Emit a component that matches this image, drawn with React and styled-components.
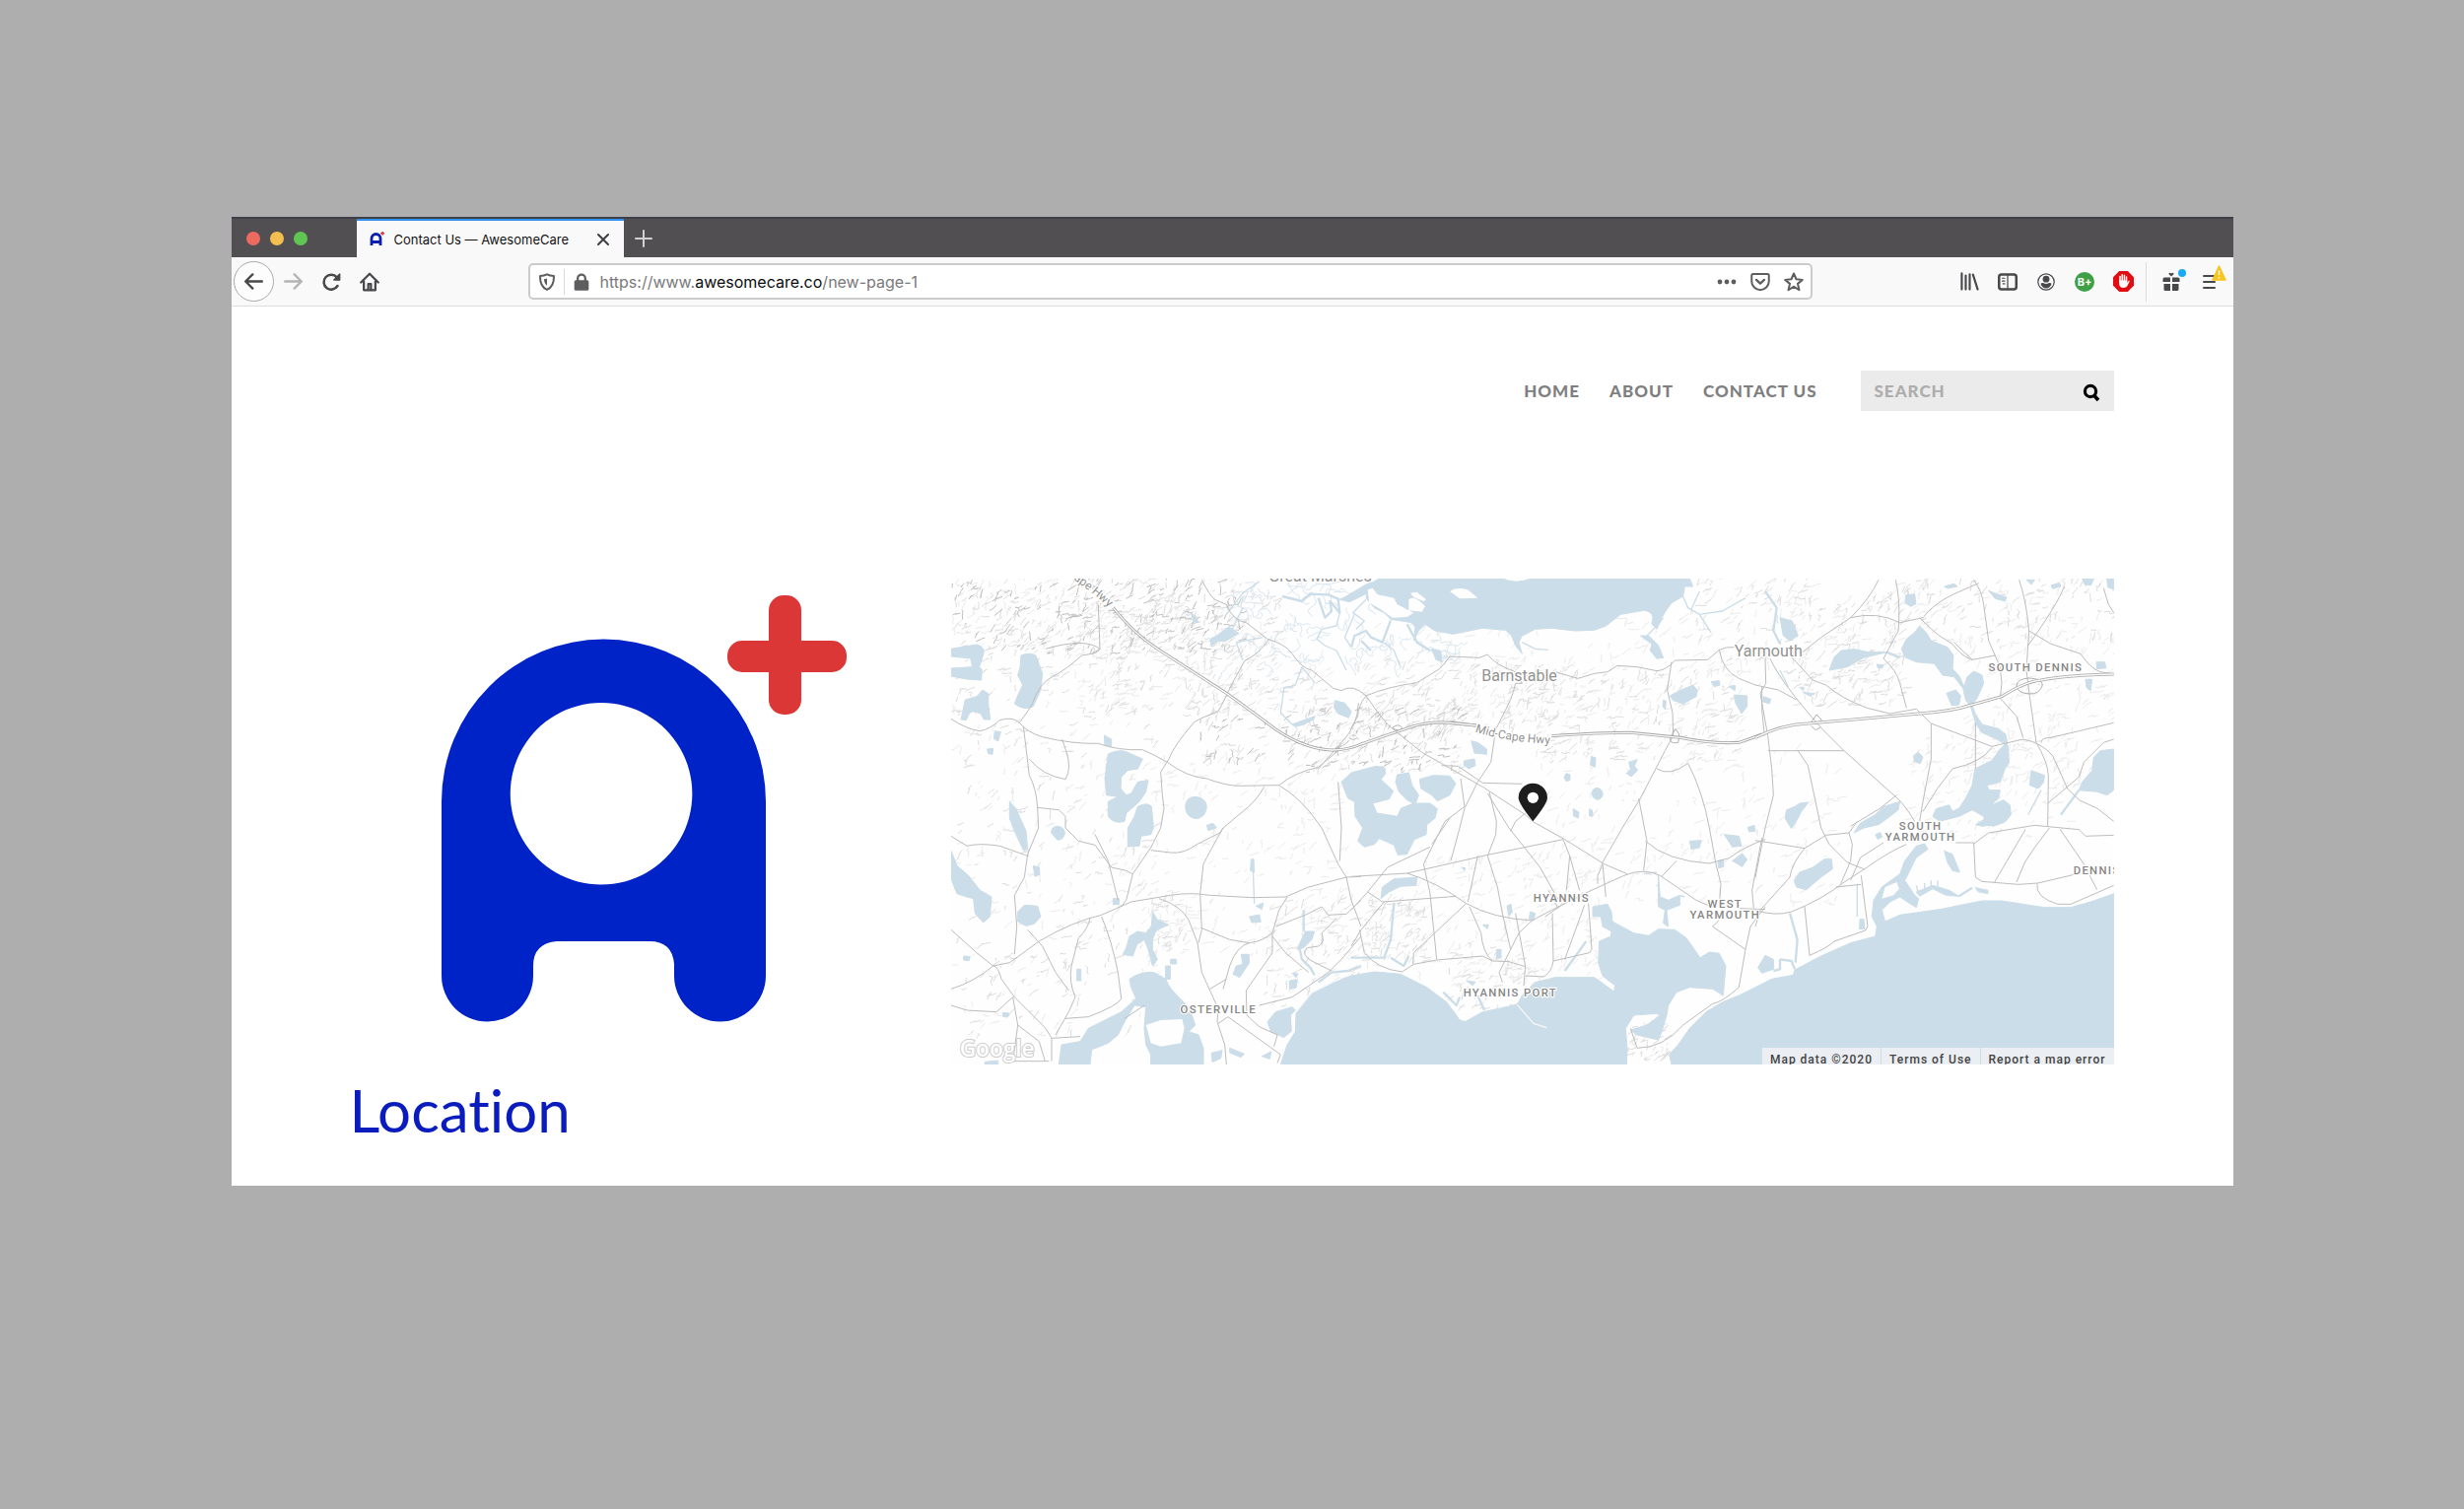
import React, { useState } from 'react';

import styled, { createGlobalStyle } from 'styled-components';

const GlobalStyle = createGlobalStyle`
  * {
    box-sizing: border-box;
  }

  body {
    margin: 0;
    background: #aeaeae;
    font-family: Inter, "Liberation Sans", sans-serif;
  }

  button {
    padding: 0;
    border: 0;
    background: transparent;
    font: inherit;
    cursor: pointer;
  }
`

const Desktop = styled.div`
  min-height: 100vh;
  padding: 220px 0;
  background: #aeaeae;
`

const BrowserWindow = styled.main`
  width: 81.24%;
  margin: 0 auto;
  background: #ffffff;
`

/* ---------- title bar ---------- */

const TitleBar = styled.div`
  display: flex;
  height: 41px;
  border-top: 2px solid #3d4046;
  background: #524f52;
`

const TrafficLights = styled.div`
  display: flex;
  align-items: center;
  gap: 10px;
  width: 127px;
  padding-left: 15px;
`

const Light = styled.button`
  width: 14px;
  height: 14px;
  border-radius: 50%;
  background: ${({ $color }) => $color};
`

const Tab = styled.div`
  display: flex;
  align-items: center;
  width: 271px;
  padding: 0 12px 0 13px;
  border-top: 2px solid #3290ec;
  background: #f9f9fa;
  color: #141414;
  font-size: 13px;
`

const TabTitle = styled.span`
  flex: 1;
  margin-left: 10px;
  white-space: nowrap;
`

const TabButton = styled.button`
  display: flex;
  align-items: center;
  justify-content: center;
  width: ${({ $wide }) => ($wide ? 40 : 18)}px;
  color: ${({ $wide }) => ($wide ? '#d2d1d2' : '#3e3e40')};
`

/* ---------- toolbar ---------- */

const Toolbar = styled.div`
  display: flex;
  align-items: center;
  height: 50px;
  border-bottom: 1px solid #dedede;
  background: #f9f9fa;
`

const ToolGroup = styled.div`
  display: flex;
  flex: 0 0 ${({ $width }) => $width}px;
  align-items: center;
  justify-content: ${({ $end }) => ($end ? 'flex-end' : 'flex-start')};
  height: 100%;
  padding: 0 4px 0 2px;
`

const ToolButton = styled.button`
  position: relative;
  display: flex;
  align-items: center;
  justify-content: center;
  width: 39px;
  height: 40px;
  color: ${({ $faded }) => ($faded ? '#b4b4b5' : '#48484a')};
`

const BackButton = styled(ToolButton)`
  width: 41px;
  height: 41px;
  border: 1px solid #a9a9aa;
  border-radius: 50%;
  background: #fdfdfd;
`

const ToolDivider = styled.span`
  width: 1px;
  height: 40px;
  margin: 0 6px 0 3px;
  background: #dcdcdc;
`

const AddressBar = styled.div`
  display: flex;
  flex: 1;
  align-items: center;
  height: 37px;
  border: 2px solid #cbcbcc;
  border-radius: 5px;
  background: #ffffff;
`

const AddressButton = styled.button`
  display: flex;
  align-items: center;
  justify-content: center;
  width: 34px;
  height: 32px;
  color: #5d5d5f;
`

const AddressDivider = styled.span`
  width: 1px;
  height: 26px;
  background: #d9d9d9;
`

const Address = styled.div`
  flex: 1;
  padding-left: 2px;
  color: #7a7a7b;
  font-size: 16px;
  line-height: 24px;
  white-space: nowrap;
  outline: 0;

  b {
    color: #0c0c0d;
    font-weight: 400;
  }
`

const GiftDot = styled.span`
  position: absolute;
  top: 7px;
  right: 5px;
  width: 8px;
  height: 8px;
  border-radius: 50%;
  background: #1ba8f5;
`

const Warning = styled.svg`
  position: absolute;
  top: 3px;
  right: 3px;
`

/* ---------- site ---------- */

const Site = styled.div`
  padding: 65px 121px 41px 120px;
`

const SiteHeader = styled.header`
  display: flex;
  align-items: center;
  justify-content: flex-end;
  margin-bottom: 170px;
  font-family: "Futura PT", Lato, sans-serif;
  font-size: 17px;
  font-weight: 900;
  letter-spacing: 1px;
`

const Nav = styled.nav`
  display: flex;
  gap: 30px;
  margin-right: 44px;
`

const NavLink = styled.a`
  color: #7f7f7f;
  text-decoration: none;
  text-transform: uppercase;
`

const SearchForm = styled.form`
  display: flex;
  align-items: center;
  width: 257px;
  height: 41px;
  padding: 0 14px;
  background: #ebebeb;
`

const SearchInput = styled.input`
  flex: 1;
  min-width: 0;
  padding: 0;
  border: 0;
  outline: 0;
  background: transparent;
  color: #555555;
  font: inherit;
  letter-spacing: inherit;

  &::placeholder {
    color: #adadad;
    opacity: 1;
  }
`

const SearchButton = styled.button`
  display: flex;
  align-items: center;
  padding-top: 3px;
`

const Columns = styled.section`
  display: grid;
  grid-template-columns: 1fr 2fr;
  gap: 20px;
  align-items: start;
`

const Logo = styled.svg`
  display: block;
  width: 100%;
`

const Heading = styled.h1`
  margin: 13px 0 0;
  color: #0a1cbe;
  font-family: "Futura PT", Lato, sans-serif;
  font-size: 60px;
  font-weight: 400;
  font-variant-ligatures: none;
  line-height: 72px;
`

const MapFrame = styled.div`
  position: relative;
  overflow: hidden;
`

const MapSvg = styled.svg`
  display: block;
  width: 100%;
  background: #fefefe;
`

const Attribution = styled.div`
  position: absolute;
  right: 0;
  bottom: 0;
  display: flex;
  height: 17px;
  overflow: hidden;
  font-family: Roboto, sans-serif;
  font-size: 12px;
  font-weight: 500;
  letter-spacing: 1px;
  line-height: 24px;
`

const Credit = styled.a`
  padding: 0 8px;
  border-left: 1px solid #cbdde8;
  background: rgba(243, 243, 244, 0.8);
  color: #444444;
  text-decoration: none;
  white-space: nowrap;
`

/* ---------- icons ---------- */

const Stroke = ({ size = 18, width = 2, box = 16, children }) => (
  <svg width={size} height={size} viewBox={`0 0 ${box} ${box}`} fill="none" stroke="currentColor" strokeWidth={width} strokeLinecap="round" strokeLinejoin="round">
    {children}
  </svg>
)

const arrow = 'M15 7H3.414l4.293-4.293a1 1 0 0 0-1.414-1.414l-6 6a1 1 0 0 0 0 1.414l6 6a1 1 0 0 0 1.414-1.414L3.414 9H15a1 1 0 0 0 0-2z';

const Arrow = ({ flip }) => (
  <svg width="19" height="19" viewBox="0 0 16 16" fill="currentColor">
    <path d={arrow} transform={flip ? 'translate(16 0) scale(-1 1)' : undefined} />
  </svg>
)

const Reload = () => (
  <Stroke size={20}>
    <path d="M13.2 11.2A6 6 0 1 1 12.6 4.2L14.2 5.8" />
    <path d="M15 1.6V6.4H10.2Z" fill="currentColor" strokeWidth="1" />
  </Stroke>
)

const Home = () => (
  <Stroke size={20} width={1.8}>
    <path d="M1 8.4L8 1.4L15 8.4" />
    <path d="M3.3 7.5V14.6H12.7V7.5" />
    <path d="M6.9 14.4V9.6H9.1V14.4" strokeWidth="1.8" />
  </Stroke>
)

const Shield = () => (
  <Stroke width={1.8}>
    <path d="M8 1.2C6.2 2.2 4 2.6 1.8 2.6C1.6 8.8 3.4 13 8 15C12.6 13 14.4 8.8 14.2 2.6C12 2.6 9.8 2.2 8 1.2Z" />
    <path d="M8 4.8C7 5.2 6.2 5.3 5.3 5.4C5.4 8.2 6.2 10.2 8 11.4Z" fill="currentColor" stroke="none" />
  </Stroke>
)

const Lock = () => (
  <svg width="18" height="18" viewBox="0 0 16 16">
    <path d="M4.6 8V4.8a3.4 3.4 0 0 1 6.8 0V8" fill="none" stroke="currentColor" strokeWidth="2" />
    <rect x="1.5" y="6.5" width="13" height="9.3" rx="1.4" fill="currentColor" />
  </svg>
)

const Dots = () => (
  <svg width="20" height="20" viewBox="0 0 20 20" fill="currentColor">
    <circle cx="3" cy="10" r="2.4" />
    <circle cx="10" cy="10" r="2.4" />
    <circle cx="17" cy="10" r="2.4" />
  </svg>
)

const Pocket = () => (
  <Stroke size={20} width={1.6}>
    <path d="M2.2 1.5H13.8Q15 1.5 15 2.7V7.5A7 7 0 0 1 1 7.5V2.7Q1 1.5 2.2 1.5Z" />
    <path d="M4.8 6.3L8 9.3L11.2 6.3" strokeWidth="1.8" />
  </Stroke>
)

const Star = () => (
  <Stroke size={20} width={1.6}>
    <path d="M8 1.2L10 5.8L15 6.3L11.2 9.5L12.4 14.6L8 11.9L3.6 14.6L4.8 9.5L1 6.3L6 5.8Z" />
  </Stroke>
)

const Library = () => (
  <Stroke size={19} width={1.8}>
    <path d="M1.2 1.2V14.8M4.6 3V14.8M8 2V14.8M10.8 2.2L14.8 14.8" />
  </Stroke>
)

const Sidebar = () => (
  <Stroke size={20}>
    <rect x="1" y="2" width="14" height="12" rx="2" />
    <path d="M8 2V14" strokeWidth="1" />
    <path d="M3.6 5H5.6M3.6 7.3H5.6M4.2 9.5H5.6" strokeWidth="0.9" />
  </Stroke>
)

const Account = () => (
  <svg width="18" height="18" viewBox="0 0 18 18">
    <circle cx="9" cy="9" r="8.2" fill="none" stroke="currentColor" strokeWidth="1.2" />
    <circle cx="9" cy="6.2" r="3.4" fill="currentColor" />
    <path d="M3.4 10.7Q5.2 9.5 6.6 10.2Q9 11.6 11.4 10.2Q12.8 9.5 14.6 10.7Q13 15.4 9 15.4Q5 15.4 3.4 10.7Z" fill="currentColor" />
  </svg>
)

const GradeBadge = styled.span`
  width: 20px;
  height: 20px;
  border-radius: 50%;
  background: #3f9f46;
  color: #ffffff;
  font-size: 11px;
  font-weight: 700;
  line-height: 20px;
  text-align: center;
`

const Blocker = () => (
  <svg width="21" height="21" viewBox="0 0 21 21">
    <path d="M6.2 0H14.8L21 6.2V14.8L14.8 21H6.2L0 14.8V6.2Z" fill="#e00e12" />
    <path d="M7 11V5.5M9.2 10V3.8M11.4 10V4.2M13.5 11V6" stroke="#fff" strokeWidth="1.5" strokeLinecap="round" />
    <path d="M6.2 9.5H14.3V12L15.8 9.8Q16.9 9.4 16.7 10.4L14.4 14.9Q13.4 17 10.6 17Q6.2 17 6.2 13Z" fill="#fff" />
  </svg>
)

const Gift = () => (
  <svg width="18" height="20" viewBox="0 0 18 20" fill="currentColor">
    <path d="M9 4.6L6.3 2Q7.5 -.4 9 1.6Q10.5 -.4 11.7 2Z" />
    <path d="M2 5.5H8V10H.5V7Q.5 5.5 2 5.5ZM10 5.5H16Q17.5 5.5 17.5 7V10H10Z" />
    <path d="M1.5 12H8V19H3Q1.5 19 1.5 17.5ZM10 12H16.5V17.5Q16.5 19 15 19H10Z" />
  </svg>
)

const Menu = () => (
  <Stroke size={18} box={18}>
    <path d="M3 3H14M3 9H14M3 15H14" />
  </Stroke>
)

const Favicon = () => (
  <svg width="15" height="15" viewBox="0 0 15 15">
    <path d="M2 14V7A4.5 4.5 0 0 1 11 7V14M2.5 10.5H10.5" fill="none" stroke="#0a1fae" strokeWidth="2.8" />
    <path d="M11.2 1.8H15M13.1 0V3.6" stroke="#db3737" strokeWidth="1.6" />
  </svg>
)

/* ---------- map ---------- */

// Three map units make one pixel. Every tile keeps its own coordinates
// and is moved into place; shapes may run over into the next one.
const water = '#cbdde8';

const tiles = [
  {
    at: '-12 -21',
    water: [
      'M12 235L90 222Q112 228 112 245L98 290L106 298L104 330Q60 330 12 318V294L76 290L72 264L12 258Z',
      'M225 255Q250 245 270 255L290 310L285 360L262 410Q235 425 205 402L218 370L230 345L215 315L222 290Z',
      'M42 450L55 390L90 380L108 360L126 372L125 400L131 450H112L102 432L80 425L68 430L58 452Z',
      'M145 485L163 488L155 516L142 508Z',
      'M122 540L140 538L138 556L125 554Z',
      'M490 555Q530 535 560 555L595 570L580 600L550 605L530 625L528 660L545 680L560 675L580 640L612 635L605 670L585 700L545 735L540 760Q510 770 490 745L490 700L520 685L485 680L480 630Z',
      'M580 715Q610 700 622 715L628 780L620 800L590 805L585 835L550 837V780L570 745Z',
      'M725 718Q725 685 757 685Q790 690 790 718Q785 750 757 752Q728 748 725 718Z',
      'M190 700L210 722L240 790L245 845L232 848L205 790L190 750Z',
      'M840 180L858 168L888 188L850 210L822 212L805 228L800 205L820 195Z',
      'M742 125L760 140L764 155L750 152Z',
      'M478 498L500 510V532L480 528Z',
      'M1180 392L1210 400L1230 425L1222 445L1190 432L1178 415Z',
      'M1050 465L1085 452L1120 440L1115 450L1085 465L1060 472Z',
      'M1195 85L1215 75L1290 30V60L1225 92Z',
    ],
    streams: [
      'M1195 85L1160 70L1105 68L1080 90L1020 75M1130 80L1150 140L1170 120L1165 90L1195 125L1190 85',
      'M1195 125L1185 165L1140 175L1125 205L1150 225L1185 240L1215 300M1240 130L1210 200L1230 230',
      'M850 130L900 65L950 30M860 190L900 110M960 200L880 215L900 270',
      'M1120 340L1080 290L1060 345L1025 355L1015 430L1050 465',
    ],
    roads: [
      'M12 448Q60 480 100 485Q130 480 160 452Q200 440 220 460Q245 490 290 503Q380 525 460 523Q520 545 595 542Q640 562 670 580Q730 625 790 630Q850 652 890 652L1010 650Q1060 610 1130 595L1190 545',
      'M220 460Q250 420 260 400Q280 340 320 320Q360 300 410 255L440 250Q462 245 465 235L460 100',
      'M465 235Q420 200 300 235M440 250L465 235',
      'M232 470L250 620Q272 660 275 720L278 780L245 860L235 930L205 985L212 1080L205 1165',
      'M250 570Q290 620 360 632Q380 600 362 545L350 510',
      'M275 718L340 725L360 745V780L400 820L450 832L500 900L545 910L565 920',
      'M775 25Q800 75 815 85L850 100Q870 150 910 155L975 205Q1030 220 1050 250Q1080 295 1110 300L1175 355L1200 362Q1235 340 1275 378',
      'M980 205Q950 250 905 272L865 345Q840 400 825 425Q760 450 750 460Q690 530 675 570L650 610L655 680L660 720L650 780L620 840L565 920L545 1000L530 1020',
      'M1010 650Q1080 690 1140 780L1190 890L1215 930L1230 1000L1260 1080',
      'M965 655Q940 700 900 730L840 780L830 795L760 830Q720 860 680 855L620 848',
      'M1190 640L1200 780L1195 880',
      'M1252 400Q1250 470 1200 520L1130 600',
    ],
    highways: ['M505 110Q570 190 640 235L850 370Q920 420 1000 480Q1090 540 1170 543Q1220 543 1260 525Q1360 490 1420 470Q1470 455 1530 460L1610 468'],
  },
  {
    at: '1218 -21',
    water: [
      'M85 21H460Q500 40 548 21H1030L1040 45L1015 45L1010 75L975 95L960 115L945 140L930 175L915 160L918 140Q915 120 890 118L820 130L775 165L740 178L680 180L610 172L560 175L520 195L510 215L520 250L500 225L488 195L470 178L400 172L310 190L255 180L225 160L205 180L190 210L195 170L185 155L120 145L100 125L70 110L45 80L50 50L0 85V70Z',
      'M-30 640L0 612L75 592L102 598L104 615L90 632L128 668L115 692L65 705L78 735L140 745L152 720L190 705L240 705L262 722L255 750L230 770L228 800L192 815L170 860L142 862L130 832L85 812L70 830L40 838L20 820L35 780L12 745L10 700L-10 690Z',
      'M140 618L175 612L185 650L205 680L195 708L170 695L145 670L135 640Z',
      'M208 632L250 620L300 622L318 645L300 680L262 698L245 680L212 660Z',
      'M365 515L385 520L412 540V556L375 552Z',
      'M345 575L375 570L378 590L358 600L342 588Z',
      'M245 235L270 240L277 275L258 268Z',
      'M648 626l6-12l12 4v16l-12 4z',
      'M732 676q2-18 18-18q14 4 16 18q-4 18-18 18q-14-4-16-18z',
      'M730 562l14 5l-2 28l-14-6z',
      'M845 580l25-8l-8 20l10 12l-20 20l-14-10l12-12z',
      'M970 378L1000 362L1040 345L1053 360L1050 380L1010 402L980 392Z',
      'M1095 335L1120 332L1122 345L1105 350Z',
      'M1165 375L1205 378V410L1188 432L1170 400Z',
      'M675 722l18 10l-2 18l-14-6zM725 722l8 4l2 18h-10zM1150 350l18-4v16zM950 390l8 4l-2 26l-8-10z',
      'M880 195H905L935 225L950 262L930 265L910 240L915 220Z',
    ],
    land: [
      'M300 60Q320 45 355 55L385 80L330 82Z',
      'M175 85Q190 70 225 105L215 122L175 118Z',
      'M50 55L65 50L80 70L130 80L140 100L190 125L170 138L125 140L90 115L55 95Z',
      'M180 65L200 62L228 85L220 90L190 78Z',
      'M115 150L185 165L180 195L160 205L110 185Z',
    ],
    streams: [
      'M120 148L95 215L60 200L45 180L10 195L0 230M60 240L30 210M170 160L200 215L240 240',
      'M45 85L5 125L40 150L15 175M100 215L130 240L150 290',
      'M520 215L560 235L600 238M900 195L935 160L950 140',
      'M1010 75L1025 110L1060 130L1095 185M1060 130L1130 120L1200 80M1060 60L1035 115',
    ],
    roads: [
      'M45 378Q80 430 110 465L215 550L400 655L530 740L555 762L650 815L770 890L840 920',
      'M45 378Q110 350 200 338L270 295L300 258L390 262L415 252Q440 285 500 305L520 340H500Q490 380 480 400L440 480L425 580L385 640L345 720L330 780L303 880',
      'M45 378Q20 410 20 440L0 475',
      'M620 305L690 325L740 310L780 305L810 286L870 290L930 302Q960 300 985 270L1085 268L1120 238Q1140 228 1165 230',
      'M1120 238Q1130 300 1180 325L1230 345L1300 360L1355 390',
      'M975 275L962 360L978 430L980 500L955 545L880 690L825 780L762 890',
      'M930 600Q970 625 1025 583Q1070 670 1090 780L1110 890L1125 950L1120 1020',
      'M275 590L325 592L400 643L520 646',
      'M415 675L480 780L575 900L625 990L640 1010',
      'M420 670L442 760L440 800L415 865L445 960L460 1040L485 1150L450 1220L460 1250',
      'M345 715L285 760L220 890L240 980L260 1180',
      'M333 630L345 715M530 735L500 760L485 790',
      'M875 690L900 820L890 910',
      'M1250 350V420L1258 500',
    ],
    highways: ['M300 460L380 468M610 500Q760 490 850 490L1000 505Q1100 525 1180 520Q1210 510 1250 495'],
    loops: ['M125 475q20-15 30 0q-10 15-30 0M985 480q20 10 10 40q-20 5-25-8z'],
  },
  {
    at: '2448 -21',
    water: [
      'M75 140L112 150L130 195L105 210L85 195Z',
      'M457 72l28-4l4 30l-16 8l-16-10z',
      'M225 300L240 260L262 240L300 236L345 245H400L330 262L280 290Z',
      'M445 235L460 205L485 185L500 165L520 185L535 210L585 230L603 255L600 295L622 320L635 350L645 320L665 303L690 315L695 340L675 385L660 405L668 430L690 465L740 478L762 495L770 540L772 580L760 600L745 640L705 650L712 665H745L740 690L715 712L755 695L775 710L778 740L760 762L725 775L700 770L695 745L660 725L620 745L560 760L540 745L550 722L590 710L600 730L620 720L640 690L660 650L668 600L720 575L745 540L760 525L735 510L690 490L672 465L655 410L640 390L632 355L605 320L570 315L545 280L490 275L455 260Z',
      'M582 370L610 360L625 378L620 405L598 408Z',
      'M710 58L735 68L765 78L760 90L730 82Z',
      'M575 45l30-8l10 8l-30 6zM900 42l25-8l5 10l-25 8zM995 21h35l-8 20l-20-2zM1070 21h21v32l-18-5zM825 25h25l-10 14z',
      'M1038 275h25l5 18l-28 3zM1005 328h20l-5 35l-12-10z',
      'M482 560l14-10l14 14l-8 20l-18-6z',
      'M840 605L880 620L878 640L862 660L835 650Z',
      'M1091 540L1050 545L1030 565L1025 605L995 640L985 665L1040 670L1070 680L1091 665Z',
      'M135 705L162 702L140 730L130 750L110 782L90 750L95 725L120 715Z',
      'M440 700L390 715L365 740L320 765L300 795L330 780L375 770L410 745L435 725Z',
      'M135 352h14l-4 10zM145 367l35 5l-15 6zM25 380l22 8l-4 14l-20-6zM370 282l20 2l-4 10l-14-2z',
    ],
    streams: ['M30 60L65 110L55 180L75 220M400 245L440 262M985 665L930 740', 'M100 350L75 300M870 665L830 740'],
    roads: [
      'M375 25Q350 80 290 140L200 200L140 248',
      'M290 140Q370 120 440 155L510 140Q540 100 600 70L680 35',
      'M427 25Q440 80 437 150L435 180L390 265Q430 300 440 340L460 415',
      'M665 25Q690 60 695 100L710 210L745 290L750 340L745 385L795 440L815 505',
      'M803 25Q825 90 833 180L825 300L835 380L855 520Q890 580 892 620L890 775',
      'M940 45Q920 100 830 225',
      'M833 180L900 220L990 250Q1020 295 1050 305L1091 312',
      'M500 140Q540 180 560 195L600 220Q630 260 660 268L730 255M605 215L630 240L660 268',
      'M45 265Q80 340 200 475L270 545L410 670Q450 700 485 760',
      'M110 260L175 330L215 345Q260 385 340 415L410 432L490 418L535 462L720 532L815 510Q870 520 905 560L950 660L985 695L1040 720L1091 760',
      'M535 462V570L510 700L500 760',
      'M720 535Q690 580 600 600Q550 660 510 730',
      'M30 265L32 340L15 370L38 500L50 600L55 680L30 780L0 930',
      'M38 545H270M130 545L160 590L200 780L225 830L280 885L330 905',
      'M870 520Q870 505 900 505L1091 460',
      'M890 705L985 625L1000 580L1060 520L1091 510',
      'M430 680L380 720L290 775M1060 50L1075 100L1091 125M670 460V600',
    ],
    highways: ['M0 505Q80 465 160 462L300 450L500 432Q600 425 660 405L750 380Q820 335 870 330Q950 315 1091 312'],
    loops: ['M795 348q0-22 39-24q40 2 40 22q-10 28-40 26q-36-2-39-24zM172 455l14-20l16 16l-16 12zM170 470l14 12l14-8'],
  },
  {
    at: '-12 729',
    water: [
      'M317 45Q317 25 337 25Q358 28 358 48Q352 68 335 66Z',
      'M262 145l18 5l2 22l-15 6z',
      'M12 100L30 145L65 175L100 220L135 240L130 300L110 318L85 290L80 245L60 240L30 230L12 185Z',
      'M215 285L235 265L275 268L285 300L265 322L240 328L215 315Z',
      'M790 22l20-6l10 14l-25 8zM925 125h8l2 40l-12-5zM920 300l30-6l5 22l-28 2zM940 268l22-10l-4 20z',
      'M545 395L555 360L580 345L605 350L622 330L625 285L640 310L675 325L650 335L635 345L625 370V400L640 430L625 450L612 400L600 370L578 385L565 420L535 415Z',
      'M555 490Q590 465 630 470L665 490L680 520L705 545L735 575L745 600L755 630L735 650L765 660L780 700V750H620V720L605 690L600 640L605 575L570 570L540 620L520 660L490 685L440 705L435 750H340L348 690L405 680L430 640L470 620L530 590L575 550L560 515Z',
      'M395 460h12v35h-12zM665 450h14v40h-14zM680 430h18v14h-18zM505 245h18v18h-18z',
      'M895 415H918L920 440L890 485L870 475L880 450L900 445Z',
      'M1090 345H1118L1110 370L1085 395L1065 400Z',
      'M975 620L1000 590L1050 575L1060 585L1045 600L1048 650L1025 668L985 650Z',
      'M1042 495l24-4l-4 26l-20 2zM1050 472l18 2l-6 12zM805 715l32-8l-4 24l-26 12zM860 700l44 18l-10 10l-34-14zM958 725l28-14l-4 22zM50 420l20 2l-4 12l-16-2zM170 592l18 2l-4 12l-14-2zM115 742l40-4v12h-40z',
    ],
    land: ['M605 630L650 615L715 612L722 640L712 685L650 695L620 685Z', 'M1025 670L1060 640V655L1040 680Z'],
    streams: [
      'M1072 395L1080 430L1105 455L1118 478M1130 500L1170 470L1220 465L1260 450M1085 345V280',
      'M650 480L700 545M930 125L935 260',
    ],
    roads: [
      'M12 55L60 85Q100 75 160 85L245 115',
      'M12 340L90 410L140 450L190 440L280 375Q380 315 470 295L560 255L680 235Q740 225 800 235L930 242L1030 240L1100 210L1215 180L1260 178',
      'M12 520Q80 500 140 450Q155 450 165 490L205 545L300 640L318 670V740',
      'M12 570L60 585L150 590L200 545L215 630L280 680L298 740M215 630L200 740H310',
      'M435 305Q430 335 400 365L378 450Q370 500 390 545L370 590L330 660',
      'M470 300Q500 370 520 470L530 550Q520 570 430 605L360 610',
      'M645 245Q710 265 735 310L762 380L775 470L825 580L822 620L845 690L850 750',
      'M765 380L775 340L770 230L780 140Q800 100 840 30',
      'M775 335L860 370L920 380Q960 375 990 350L1010 280L1035 240',
      'M990 350V410L910 525L912 600L950 635L1005 660L995 695',
      'M825 625L855 605L1015 720L1005 745',
      'M1000 330L1090 295L1140 270L1160 295L1215 292L1260 250',
      'M950 570L1050 545L1160 470L1200 430L1260 360',
      'M1170 465L1110 435Q1075 415 1095 395L1130 390Q1150 380 1140 350L1185 305',
      'M245 340L290 390L330 470L370 525',
      'M840 520L860 450Q880 390 920 380M800 520L850 490M990 360L1030 410L1100 470',
      'M450 50L490 130L520 250M600 570L540 610M318 670L405 665',
    ],
  },
  {
    at: '1218 729',
    water: [
      'M-215 750L-195 690L-170 650L-168 595L-120 535L-50 500L0 480L70 468L150 475L230 515L290 560L320 600Q330 622 350 618L400 590L505 568L520 540L560 500L620 485H740L800 528L803 510L765 480L752 440L755 375L790 360L792 345L765 330L760 300L735 300V270L780 262L792 285L795 315L860 350L905 358L935 338L985 340L1020 365L1062 425L1090 408L1120 412L1140 450L1132 540L1100 520L1030 515L990 530L965 570L960 600L945 650L935 675L870 660L850 645L900 630L940 600L930 595L860 600L835 640L840 700L838 750Z',
      'M90 245L95 210L130 185L200 180L198 205L150 208L115 225Z',
      'M474 268l12-6l4 24l-10 12zM545 285l15 5l-5 22l-14-4zM442 400h14v25l-14 2zM400 325h18l-4 12zM335 150l12 2l-2 8zM350 495l28 4l-8 10z',
      'M935 175L940 240L965 250L1000 235V265L960 280L965 330L950 320L955 280L935 270Z',
      'M1030 70L1065 68L1060 90L1035 95Z',
      'M1135 50L1180 55L1188 85L1160 88Z',
      'M1160 130l30-22l15 18l-15 22zM1207 28l20-6l2 18l-18 2zM1116 130l16-4l2 22l-16 4z',
    ],
    streams: ['M130 260L120 370L100 425H0M120 425L160 450L175 420M280 530L320 570L330 545M385 540L405 585M650 465L690 410L715 375', 'M1000 235L1015 240M890 170L930 165'],
    shore: ['M505 568L555 625L595 638', 'M-168 590L-120 530L-50 495L0 475'],
    roads: [
      'M0 178L170 168L415 112L645 65L665 115L695 220M665 115L655 220',
      'M170 168Q260 195 350 260Q430 305 550 312L610 280L720 225L830 175Q890 150 940 175L1050 250L1085 265',
      'M240 88L110 150L50 225L0 280M50 225L95 255L320 238',
      'M350 260L190 410L188 445M385 115L355 255M245 80L300 0',
      'M25 340L40 410Q80 460 155 468L190 445L260 432L400 420L430 435L480 437L530 452M0 390L30 340L100 255',
      'M360 270L395 350Q400 410 430 435M550 312L510 350L485 400',
      'M500 290L530 450L525 510M612 290L615 435Q610 470 585 483L530 480',
      'M615 435L725 410L732 400L722 260M710 265L650 430M590 300L640 265L700 235',
      'M765 140L775 240M765 140L750 175V200M600 220L630 275',
      'M895 70Q960 130 1090 138L1150 122Q1200 85 1260 65M990 130L945 178',
      'M1250 60L1220 220L1225 275M1180 275L1260 278',
      'M1100 330L1200 400L1180 515Q1130 560 1100 565L1010 630Q950 700 870 700L850 640M1200 400L1215 330L1260 270M1100 330L1120 310',
    ],
  },
  {
    at: '2448 729',
    water: [
      'M-255 750L-262 720L-235 690L-200 640L-150 590L-100 560L-50 540L0 515L50 490L115 478L120 462L200 420L290 380L365 360L370 330L355 300L360 250L385 210L440 170L455 130L490 85L515 78L525 95L490 120L470 160L455 190L485 235L497 245L490 272L470 260L440 240L410 255L385 280L395 315L440 295L560 278L690 252H750L880 272H960L1020 255L1092 230V752Z',
      'M118 190L135 165L175 150L210 125H232L235 155L200 180L155 218L125 210Z',
      'M575 100L600 110L622 165L600 160L585 135Z',
      'M490 225L540 205L590 220L620 238L580 235L540 215L500 238Z',
      'M8 455L30 418L55 430V460L20 472Z',
      'M366 50l14-6l6 14l-14 6zM318 308h12l3 30h-16zM670 20L695 5L740 0L760 5L735 18L690 25ZM670 212l38 8v10l-30-6z',
    ],
    land: ['M385 245L395 210L430 195L438 215L420 235Z'],
    streams: ['M75 430L110 435L120 460M105 290L128 370L122 440M75 430V460L55 465M620 238L660 212', 'M310 200V300M495 225L490 205M515 215V198M535 208V190M555 208V190'],
    roads: [
      'M0 280Q60 300 110 285Q200 250 270 195L340 150Q410 100 460 80',
      'M0 68L150 92Q110 140 105 180L15 280L0 330',
      'M150 92L215 52L285 45L295 80L290 130L260 200M285 45L310 10',
      'M290 190L320 120L390 75',
      'M150 270L165 418Q220 395 240 375L335 342L342 330L322 175M245 210L322 202',
      'M610 75H665L670 180L690 193L800 202L860 198L970 172',
      'M665 78L710 45L850 22L985 35L1005 55L1091 52',
      'M822 35L728 195M895 30L850 90L820 135L795 195M928 35L1000 140L1040 218',
      'M858 200Q850 240 920 262H960L1091 205',
    ],
  },
];

// [left, top, right, bottom, strokes, strength 0-2]
const hills = [
  [0, 0, 880, 230, 520, 2],
  [0, 200, 560, 460, 110, 1],
  [380, 60, 1000, 420, 340, 1],
  [700, 230, 1150, 420, 110, 1],
  [740, 430, 1080, 570, 80, 2],
  [1080, 400, 1560, 600, 240, 2],
  [1240, 250, 1820, 480, 280, 1],
  [1780, 280, 2400, 560, 300, 1],
  [1280, 120, 2300, 280, 90, 0],
  [2250, 0, 2620, 330, 120, 1],
  [2560, 60, 2900, 400, 230, 1],
  [2850, 0, 3540, 200, 180, 1],
  [3080, 180, 3540, 640, 200, 0],
  [0, 450, 620, 1400, 330, 1],
  [560, 560, 1200, 1150, 210, 0],
  [600, 980, 720, 1150, 50, 1],
  [950, 980, 1300, 1330, 140, 1],
  [1250, 970, 1440, 1170, 110, 1],
  [1400, 850, 1980, 1240, 180, 0],
  [1500, 1120, 1760, 1320, 70, 1],
  [1750, 520, 2700, 1000, 200, 0],
  [2900, 480, 3400, 800, 130, 0],
  [2050, 1350, 2180, 1470, 50, 1],
];

const random = (seed) => {
  let value = seed;
  return () => {
    value = (value * 16807) % 2147483647;
    return value / 2147483647;
  }
}

const drawHills = () => {
  const next = random(4711);
  const layers = ['', '', ''];
  hills.forEach(([left, top, right, bottom, count, strength]) => {
    for (let i = 0; i < count; i++) {
      const x = left + next() * (right - left);
      const y = top + next() * (bottom - top);
      const angle = -0.8 + (next() - 0.5) * 1.9;
      const length = 6 + next() * 14;
      const dx = Math.cos(angle) * length;
      const dy = Math.sin(angle) * length;
      const bend = (next() - 0.5) * 14;
      const level = Math.min(2, Math.floor(next() * (strength + 1)));
      layers[level] += `M${x.toFixed(0)} ${y.toFixed(0)}q${(dx + bend).toFixed(0)} ${(dy - bend).toFixed(0)} ${dx.toFixed(0)} ${dy.toFixed(0)}t${(dx * 0.8 + bend).toFixed(0)} ${(dy * 0.6).toFixed(0)}`;
    }
  });
  return layers;
}

// Creeks of the salt marsh under the bay
const drawMarsh = () => {
  const next = random(97);
  let d = '';
  for (let i = 0; i < 90; i++) {
    let heading = next() * 6;
    d += `M${(830 + next() * 720).toFixed(0)} ${(10 + next() * 260).toFixed(0)}`;
    for (let j = 0; j < 6; j++) {
      heading += (next() - 0.5) * 2.6;
      d += `l${(Math.cos(heading) * 12).toFixed(0)} ${(Math.sin(heading) * 12).toFixed(0)}`;
    }
  }
  return d;
}

const hillLayers = drawHills();
const marsh = drawMarsh();
const hillColors = ['#ebebeb', '#dcdcdc', '#bebebe'];

const MapLabel = styled.text`
  fill: ${({ $town }) => ($town ? '#868686' : '#929292')};
  stroke: #ffffff;
  stroke-width: 7px;
  stroke-linejoin: round;
  paint-order: stroke;
  font-family: Roboto, sans-serif;
  font-size: ${({ $size }) => $size || 36}px;
  font-weight: ${({ $town }) => ($town ? 500 : 400)};
  letter-spacing: ${({ $town }) => ($town ? 4 : 0)}px;
`

const GoogleMark = styled.text`
  fill: #ffffff;
  stroke: #cccccc;
  stroke-width: 6px;
  paint-order: stroke;
  font-family: "Open Sans", sans-serif;
  font-size: 68px;
  font-weight: 600;
`

const towns = [
  ['SOUTH DENNIS', 3301, 282],
  ['SOUTH', 2951, 765],
  ['YARMOUTH', 2951, 799],
  ['HYANNIS', 1858, 983],
  ['WEST', 2356, 1001],
  ['YARMOUTH', 2356, 1035],
  ['HYANNIS PORT', 1702, 1271],
  ['OSTERVILLE', 814, 1322],
];

const LocationMap = () => (
  <MapSvg viewBox="0 0 3540 1479" role="img" aria-label="Map of Barnstable and Hyannis">
    {hillLayers.map((d, i) => (
      <path key={i} d={d} fill="none" stroke={hillColors[i]} strokeWidth="3" />
    ))}
    <path d={marsh} fill="none" stroke="#dce8ef" strokeWidth="3" />
    {tiles.map((tile) => (
      <g key={tile.at} transform={`translate(${tile.at})`}>
        <path d={tile.water.join('')} fill={water} stroke={water} strokeWidth="3" strokeLinejoin="round" />
        {tile.land && <path d={tile.land.join('')} fill="#fefefe" />}
        <path d={tile.streams[0]} fill="none" stroke={water} strokeWidth="7" strokeLinejoin="round" />
        <path d={tile.streams.slice(1).join('')} fill="none" stroke={water} strokeWidth="4" strokeLinejoin="round" />
        {tile.shore && <path d={tile.shore.join('')} fill="none" stroke="#f4f8fa" strokeWidth="4" />}
      </g>
    ))}
    {tiles.map((tile) => (
      <g key={tile.at} transform={`translate(${tile.at})`} fill="none" strokeLinejoin="round">
        <path d={tile.roads.join('')} stroke="#bdbdbd" strokeWidth="3" />
        {tile.loops && <path d={tile.loops.join('')} stroke="#b0b0b0" strokeWidth="3" />}
        {tile.highways && <path d={tile.highways.join('')} stroke="#a6a6a6" strokeWidth="9" />}
        {tile.highways && <path d={tile.highways.join('')} stroke="#fafafa" strokeWidth="4" />}
      </g>
    ))}

    <path id="cape-hwy" d="M352 -10Q420 30 520 124" fill="none" />
    <path id="mid-cape-hwy" d="M1595 466Q1690 498 1840 504" fill="none" />
    <MapLabel><textPath href="#cape-hwy">Cape Hwy</textPath></MapLabel>
    <MapLabel><textPath href="#mid-cape-hwy">Mid-Cape Hwy</textPath></MapLabel>
    <MapLabel $size={48} x="967" y="8">Great Marshes</MapLabel>
    <MapLabel $size={48} x="1615" y="311">Barnstable</MapLabel>
    <MapLabel $size={48} x="2384" y="238">Yarmouth</MapLabel>
    {towns.map(([name, x, y]) => (
      <MapLabel key={name + y} $town $size={34} textAnchor="middle" x={x} y={y}>{name}</MapLabel>
    ))}
    <MapLabel $town $size={34} x="3416" y="900">DENNIS</MapLabel>
    <GoogleMark x="26" y="1454">Google</GoogleMark>

    <path d="M1771 739Q1727 685 1727 667A44 44 0 0 1 1815 667Q1815 685 1771 739Z" fill="#1d1d1d" />
    <circle cx="1771" cy="667" r="17" fill="#ffffff" />
  </MapSvg>
)

const App = () => {
  const [query, setQuery] = useState('');

  return (
    <>
      <GlobalStyle />
      <Desktop>
        <BrowserWindow>
          <TitleBar>
            <TrafficLights>
              <Light $color="#ed6a5e" aria-label="Close window" />
              <Light $color="#f5bf4f" aria-label="Minimize window" />
              <Light $color="#61c554" aria-label="Zoom window" />
            </TrafficLights>
            <Tab>
              <Favicon />
              <TabTitle>Contact Us — AwesomeCare</TabTitle>
              <TabButton aria-label="Close tab">
                <Stroke size={14} box={14}><path d="M2 2L12 12M12 2L2 12" /></Stroke>
              </TabButton>
            </Tab>
            <TabButton $wide aria-label="New tab">
              <Stroke size={18} box={18}><path d="M9 1V17M1 9H17" /></Stroke>
            </TabButton>
          </TitleBar>

          <Toolbar>
            <ToolGroup $width={301}>
              <BackButton aria-label="Back"><Arrow /></BackButton>
              <ToolButton $faded aria-label="Forward"><Arrow flip /></ToolButton>
              <ToolButton aria-label="Reload"><Reload /></ToolButton>
              <ToolButton aria-label="Home"><Home /></ToolButton>
            </ToolGroup>
            <AddressBar>
              <AddressButton aria-label="Tracking protection"><Shield /></AddressButton>
              <AddressDivider />
              <AddressButton aria-label="Site information"><Lock /></AddressButton>
              <Address role="textbox" aria-label="Address" contentEditable suppressContentEditableWarning spellCheck={false}>
                https://www.<b>awesomecare.co</b>/new-page-1
              </Address>
              <AddressButton aria-label="Page actions"><Dots /></AddressButton>
              <AddressButton aria-label="Save to Pocket"><Pocket /></AddressButton>
              <AddressButton aria-label="Bookmark"><Star /></AddressButton>
            </AddressBar>
            <ToolGroup $width={427} $end>
              <ToolButton aria-label="Library"><Library /></ToolButton>
              <ToolButton aria-label="Sidebars"><Sidebar /></ToolButton>
              <ToolButton aria-label="Account"><Account /></ToolButton>
              <ToolButton aria-label="Privacy grade"><GradeBadge>B+</GradeBadge></ToolButton>
              <ToolButton aria-label="Ad blocker"><Blocker /></ToolButton>
              <ToolDivider />
              <ToolButton aria-label="What's new"><Gift /><GiftDot /></ToolButton>
              <ToolButton aria-label="Menu">
                <Menu />
                <Warning width="15" height="16" viewBox="0 0 15 16">
                  <path d="M7.5 1L14 15H1Z" fill="#f8c51c" stroke="#f8c51c" strokeWidth="1.5" strokeLinejoin="round" />
                  <path d="M7.5 5.5V10M7.5 12V13.5" stroke="#fff" strokeWidth="1.5" />
                </Warning>
              </ToolButton>
            </ToolGroup>
          </Toolbar>

          <Site>
            <SiteHeader>
              <Nav>
                <NavLink href="#home">Home</NavLink>
                <NavLink href="#about">About</NavLink>
                <NavLink href="#contact">Contact Us</NavLink>
              </Nav>
              <SearchForm onSubmit={(e) => e.preventDefault()}>
                <SearchInput aria-label="Search" placeholder="SEARCH" value={query} onChange={(e) => setQuery(e.target.value)} />
                <SearchButton aria-label="Submit search">
                  <svg width="18" height="19" viewBox="0 0 18 19" fill="none" stroke="#000">
                    <circle cx="8" cy="8" r="5.6" strokeWidth="3.2" />
                    <path d="M11.5 12L16 17" strokeWidth="3.6" />
                  </svg>
                </SearchButton>
              </SearchForm>
            </SiteHeader>

            <Columns>
              <div>
                <Logo viewBox="354 587 590 490" role="img" aria-label="AwesomeCare">
                  <path
                    d="M447 813A164.5 164.5 0 0 1 776 813V990A46.5 46.5 0 0 1 683 990V978Q681 955 658 955H564Q540 957 540 980V990A46.5 46.5 0 0 1 447 990ZM609 713A92.3 92.3 0 1 0 609.1 713Z"
                    fill="#0023c8"
                    fillRule="evenodd"
                  />
                  <rect x="779" y="604" width="33" height="121" rx="15" fill="#db3737" />
                  <rect x="737" y="650" width="121" height="32" rx="15" fill="#db3737" />
                </Logo>
                <Heading>Location</Heading>
              </div>
              <MapFrame>
                <LocationMap />
                <Attribution>
                  <Credit href="#data">Map data ©2020</Credit>
                  <Credit href="#terms">Terms of Use</Credit>
                  <Credit href="#report">Report a map error</Credit>
                </Attribution>
              </MapFrame>
            </Columns>
          </Site>
        </BrowserWindow>
      </Desktop>
    </>
  )
}

export default App
